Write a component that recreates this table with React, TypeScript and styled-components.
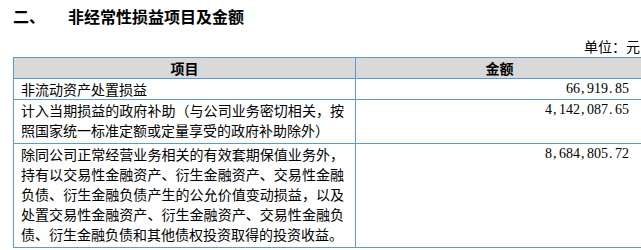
import React from "react";
import styled, { createGlobalStyle } from "styled-components";

const GlobalStyle = createGlobalStyle`
  html, body {
    margin: 0;
    padding: 0;
    background: #ffffff;
    overflow: hidden;
  }
  body {
    font-family: "Noto Sans CJK SC", "Liberation Serif", serif;
    color: #000000;
  }
`;

const Page = styled.div`
  width: 630px;
  padding-left: 13px;
`;

const Title = styled.h2`
  margin: 0;
  padding-top: 4px;
  display: flex;
  font-size: 16px;
  line-height: 24px;
  font-weight: bold;
`;

const Ordinal = styled.span`
  width: 55px;
`;

const Unit = styled.div`
  margin-top: 8px;
  padding-right: 3px;
  text-align: right;
  font-size: 14px;
  line-height: 20px;
`;

const Table = styled.div`
  margin-top: 1px;
  display: grid;
  grid-template-columns: 342px 288px;
  border-left: 1px solid #5b9bd5;
  border-top: 1px solid #5b9bd5;
  font-size: 14px;
  line-height: 20px;
`;

const Cell = styled.div<{ $head?: boolean; $pad?: number }>`
  border-right: 1px solid #5b9bd5;
  border-bottom: 1px solid #5b9bd5;
  background: ${(p) => (p.$head ? "#d9d9d9" : "#ffffff")};
  font-weight: ${(p) => (p.$head ? "bold" : "normal")};
  text-align: ${(p) => (p.$head ? "center" : "left")};
  padding: 0 11px ${(p) => p.$pad ?? 0}px 7px;
`;

const AmountCell = styled(Cell)`
  display: flex;
  justify-content: flex-end;
  align-items: flex-start;
  padding-right: 14px;
`;

const HeadCell = styled(Cell)`
  padding: 0;
`;

const Line = styled.div<{ $justify?: boolean }>`
  white-space: nowrap;
  text-align: ${(p) => (p.$justify ? "justify" : "left")};
  text-align-last: ${(p) => (p.$justify ? "justify" : "left")};
`;

const Amount = styled.span`
  display: flex;
  font-family: "Liberation Serif", serif;
  font-size: 14px;
`;

const NumChar = styled.span<{ $punct?: boolean }>`
  display: inline-block;
  width: 7px;
  text-align: ${(p) => (p.$punct ? "left" : "center")};
  padding-left: ${(p) => (p.$punct ? "1px" : "0")};
  box-sizing: border-box;
`;

function Number({ value }: { value: string }) {
  return (
    <Amount>
      {value.split("").map((c, i) => (
        <NumChar key={i} $punct={c === "," || c === "."}>
          {c}
        </NumChar>
      ))}
    </Amount>
  );
}

const rows = [
  {
    lines: ["非流动资产处置损益"],
    amount: "66,919.85",
    pad: 0,
  },
  {
    lines: [
      "计入当期损益的政府补助（与公司业务密切相关，按",
      "照国家统一标准定额或定量享受的政府补助除外）",
    ],
    amount: "4,142,087.65",
    pad: 3,
  },
  {
    lines: [
      "除同公司正常经营业务相关的有效套期保值业务外，",
      "持有以交易性金融资产、衍生金融资产、交易性金融",
      "负债、衍生金融负债产生的公允价值变动损益，以及",
      "处置交易性金融资产、衍生金融资产、交易性金融负",
      "债、衍生金融负债和其他债权投资取得的投资收益。",
    ],
    amount: "8,684,805.72",
    pad: 3,
  },
];

export default function App() {
  return (
    <Page>
      <GlobalStyle />
      <Title>
        <Ordinal>二、</Ordinal>
        <span>非经常性损益项目及金额</span>
      </Title>
      <Unit>单位：元</Unit>
      <Table>
        <HeadCell $head>项目</HeadCell>
        <HeadCell $head>金额</HeadCell>
        {rows.map((r, i) => (
          <React.Fragment key={i}>
            <Cell $pad={r.pad}>
              {r.lines.map((l, j) => (
                <Line key={j} $justify={r.lines.length > 1 && j < r.lines.length - 1}>
                  {l}
                </Line>
              ))}
            </Cell>
            <AmountCell $pad={r.pad}>
              <Number value={r.amount} />
            </AmountCell>
          </React.Fragment>
        ))}
      </Table>
    </Page>
  );
}
